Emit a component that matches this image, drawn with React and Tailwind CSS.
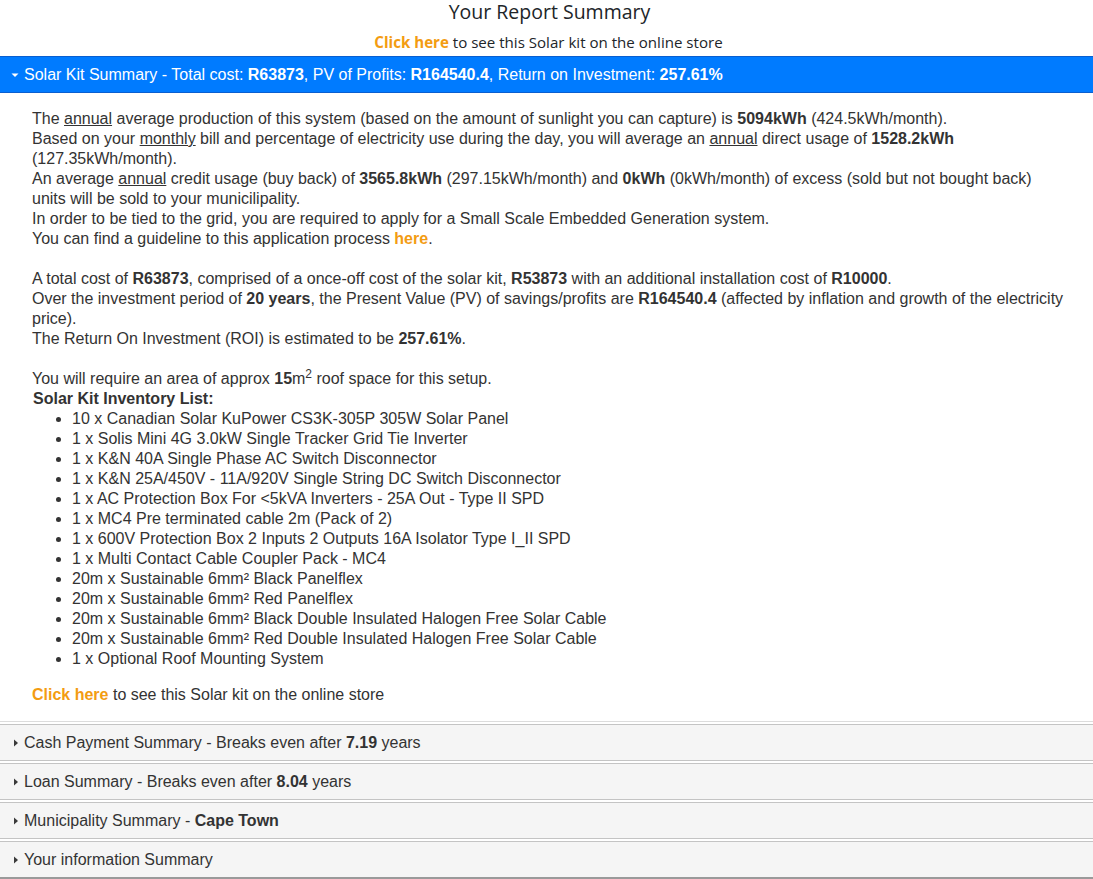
import React from 'react'

const items = [
    '10 x Canadian Solar KuPower CS3K-305P 305W Solar Panel',
    '1 x Solis Mini 4G 3.0kW Single Tracker Grid Tie Inverter',
    '1 x K&N 40A Single Phase AC Switch Disconnector',
    '1 x K&N 25A/450V - 11A/920V Single String DC Switch Disconnector',
    '1 x AC Protection Box For <5kVA Inverters - 25A Out - Type II SPD',
    '1 x MC4 Pre terminated cable 2m (Pack of 2)',
    '1 x 600V Protection Box 2 Inputs 2 Outputs 16A Isolator Type I_II SPD',
    '1 x Multi Contact Cable Coupler Pack - MC4',
    '20m x Sustainable 6mm² Black Panelflex',
    '20m x Sustainable 6mm² Red Panelflex',
    '20m x Sustainable 6mm² Black Double Insulated Halogen Free Solar Cable',
    '20m x Sustainable 6mm² Red Double Insulated Halogen Free Solar Cable',
    '1 x Optional Roof Mounting System',
]

function Caret({open, className}) {
    return (
        <svg width="8" height="8" viewBox="0 0 8 8" className={className}>
            {open
                ? <path d="M0.5 2.5 L7.5 2.5 L4 6 Z" fill="currentColor" />
                : <path d="M2 0.5 L6 4 L2 7.5 Z" fill="currentColor" />}
        </svg>
    )
}

function Section({children, last}) {
    return (
        <div className={last
            ? 'mt-[2px] border-t border-[#c4c4c4] border-b-2 border-b-[#9a9a9a] bg-[#f5f5f5] h-[38px] flex items-center pl-[12px] text-[16px] text-[#333]'
            : 'mt-[2px] border-y border-[#c4c4c4] bg-[#f5f5f5] h-[37px] flex items-center pl-[12px] text-[16px] text-[#333]'}>
            <Caret className="mr-[4px] text-[#3a3a3a]" />
            <span>{children}</span>
        </div>
    )
}

export default function App() {
    return (
        <div className="w-[1093px] h-[879px] bg-white overflow-hidden" style={{fontFamily: '"Liberation Sans", Arial, sans-serif'}}>
            <div className="text-center text-[#212529]" style={{fontFamily: '"Open Sans", sans-serif'}}>
                <h1 className="text-[19.5px] leading-[24px] pl-[6px]">Your Report Summary</h1>
                <p className="text-[15.1px] leading-[20px] mt-[8px] pl-[4px]">
                    <span className="font-bold text-[#f39c12]">Click here</span> to see this Solar kit on the online store
                </p>
            </div>

            <div className="mt-[4px] bg-[#007bff] border-y border-[#0a5fd0] h-[37px] flex items-center pl-[11px] text-white text-[16px]">
                <Caret open className="mr-[5px]" />
                <span>Solar Kit Summary - Total cost: <b>R63873</b>, PV of Profits: <b>R164540.4</b>, Return on Investment: <b>257.61%</b></span>
            </div>

            <div className="pl-[32px] pr-[26px] pt-[16px] pb-[16px] text-[16px] leading-[20px] text-[#333]">
                <p>
                    The <u>annual</u> average production of this system (based on the amount of sunlight you can capture) is <b>5094kWh</b> (424.5kWh/month).<br />
                    Based on your <u>monthly</u> bill and percentage of electricity use during the day, you will average an <u>annual</u> direct usage of <b>1528.2kWh</b> (127.35kWh/month).<br />
                    An average <u>annual</u> credit usage (buy back) of <b>3565.8kWh</b> (297.15kWh/month) and <b>0kWh</b> (0kWh/month) of excess (sold but not bought back) units will be sold to your municilipality.<br />
                    In order to be tied to the grid, you are required to apply for a Small Scale Embedded Generation system.<br />
                    You can find a guideline to this application process <b className="text-[#f39c12]">here</b>.
                </p>
                <p className="mt-[20px]">
                    A total cost of <b>R63873</b>, comprised of a once-off cost of the solar kit, <b>R53873</b> with an additional installation cost of <b>R10000</b>.<br />
                    Over the investment period of <b>20 years</b>, the Present Value (PV) of savings/profits are <b>R164540.4</b> (affected by inflation and growth of the electricity price).<br />
                    The Return On Investment (ROI) is estimated to be <b>257.61%</b>.
                </p>
                <p className="mt-[20px]">
                    You will require an area of approx <b>15</b>m<sup className="text-[12px]">2</sup> roof space for this setup.
                </p>
                <p className="font-bold pl-[1px]">Solar Kit Inventory List:</p>
                <ul className="list-disc pl-[40px]">
                    {items.map(item => <li key={item}>{item}</li>)}
                </ul>
                <p className="mt-[16px]">
                    <b className="text-[#f39c12]">Click here</b> to see this Solar kit on the online store
                </p>
            </div>

            <div className="border-t border-[#dcdcdc]">
                <Section>Cash Payment Summary - Breaks even after <b>7.19</b> years</Section>
                <Section>Loan Summary - Breaks even after <b>8.04</b> years</Section>
                <Section>Municipality Summary - <b>Cape Town</b></Section>
                <Section last>Your information Summary</Section>
            </div>
        </div>
    )
}
